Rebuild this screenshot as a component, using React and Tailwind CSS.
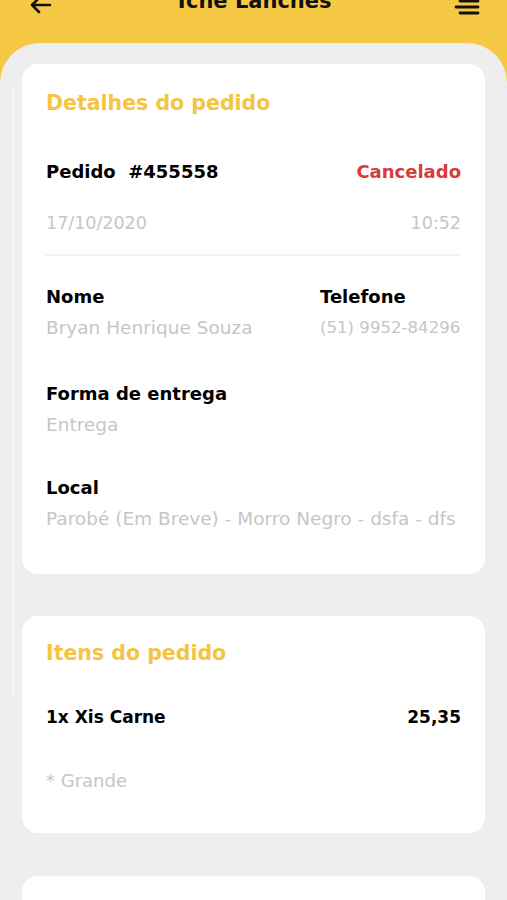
import React from "react";

const font = { fontFamily: '"DejaVu Sans", "Noto Sans", sans-serif' };

function Field({ label, value, className = "", valueClass = "text-[18.5px]" }) {
  return (
    <div className={className}>
      <p className="text-[18px] leading-[24px] font-semibold text-black">{label}</p>
      <p className={`mt-[7px] whitespace-nowrap leading-[24px] text-[#c6c6c6] ${valueClass}`}>{value}</p>
    </div>
  );
}

export default function App() {
  return (
    <div className="relative min-h-[900px] overflow-hidden bg-[#f6c944]" style={font}>
      {/* Header (scrolled, cut at top) */}
      <div className="h-[43px] px-[30px] flex items-start justify-between">
        <svg width="22" height="18" viewBox="0 0 22 18" className="-mt-[4px]" fill="none" stroke="#111" strokeWidth="2.6" strokeLinecap="round" strokeLinejoin="round">
          <path d="M20 9H2M9 2L2 9l7 7" />
        </svg>
        <h1 className="-mt-[13px] text-[21px] leading-[28px] font-bold text-[#111]">Tche Lanches</h1>
        <svg width="26" height="16" viewBox="0 0 26 16" className="-mt-[1px] -mr-[3px]" stroke="#111" strokeWidth="2.8" strokeLinecap="round">
          <path d="M6 2h18M2 8h22M6 14h18" />
        </svg>
      </div>

      {/* Content panel */}
      <div className="rounded-t-[40px] bg-[#eeeeee] px-[22px] pt-[21px] pb-[40px] min-h-[857px]">
        <div className="rounded-[16px] bg-white px-[24px] pt-[25px] pb-[43px]">
          <h2 className="text-[20.5px] leading-[28px] font-bold text-[#f4c542]">Detalhes do pedido</h2>

          <div className="mt-[43px] flex items-center justify-between">
            <p className="text-[18px] leading-[24px] font-semibold text-black">Pedido&nbsp; #455558</p>
            <p className="text-[18px] leading-[24px] font-semibold text-[#d93a3a]">Cancelado</p>
          </div>
          <div className="mt-[27px] flex items-center justify-between text-[17.5px] leading-[24px] text-[#c6c6c6]">
            <span>17/10/2020</span>
            <span>10:52</span>
          </div>

          <div className="mt-[19px] h-[2px] bg-[#f1f1f1]" />

          <div className="mt-[29px] flex justify-between">
            <Field label="Nome" value="Bryan Henrique Souza" />
            <Field label="Telefone" value="(51) 9952-84296" className="w-[141px] shrink-0" valueClass="text-[16.6px]" />
          </div>
          <Field label="Forma de entrega" value="Entrega" className="mt-[42px]" />
          <Field label="Local" value="Parobé (Em Breve) - Morro Negro - dsfa - dfs" className="mt-[39px]" />
        </div>

        <div className="mt-[42px] rounded-[16px] bg-white px-[24px] pt-[23px] pb-[40px]">
          <h2 className="text-[20.5px] leading-[28px] font-bold text-[#f4c542]">Itens do pedido</h2>
          <div className="mt-[38px] flex items-center justify-between text-[17px] leading-[24px] font-bold text-black">
            <span>1x Xis Carne</span>
            <span>25,35</span>
          </div>
          <p className="mt-[40px] text-[18px] leading-[24px] text-[#c6c6c6]">* Grande</p>
        </div>

        <div className="mt-[43px] h-[120px] rounded-[16px] bg-white" />
      </div>

      {/* scroll indicator */}
      <div className="absolute left-[12px] top-[85px] h-[610px] w-[2px] bg-[#f6f6f6]" />
    </div>
  );
}
